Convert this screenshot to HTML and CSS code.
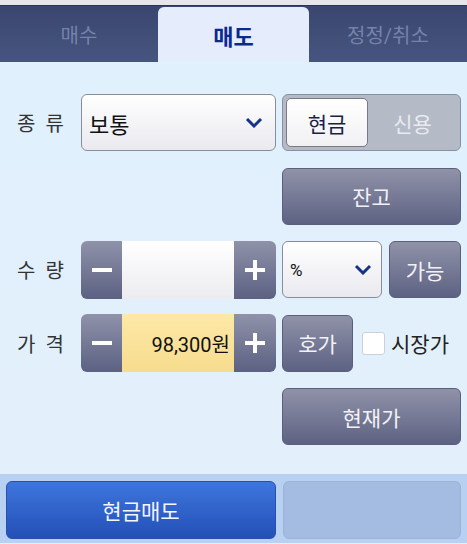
FILE: index.html
```html
<!DOCTYPE html>
<html lang="ko">
<head>
  <meta charset="UTF-8" />
  <meta name="viewport" content="width=device-width, initial-scale=1.0"/>
  <title>매도</title>
  <link rel="stylesheet" href="styles.css">
</head>
<body>
  <div class="topline"></div>
  <div class="tabs">
    <div class="tab">매수</div>
    <div class="tab active">매도</div>
    <div class="tab">정정/취소</div>
  </div>

  <main class="content">
    <div class="row">
      <div class="label">종 류</div>
      <div class="select wide">
        <span>보통</span>
        <svg class="chev" width="18" height="11" viewBox="0 0 18 11"><path d="M2 2 L9 9 L16 2" fill="none" stroke="#16338a" stroke-width="3"/></svg>
      </div>
      <div class="toggle">
        <div class="toggle-item on">현금</div>
        <div class="toggle-item">신용</div>
      </div>
    </div>

    <div class="row">
      <div class="label"></div>
      <div class="spacer"></div>
      <button class="btn full">잔고</button>
    </div>

    <div class="row">
      <div class="label">수 량</div>
      <div class="stepper">
        <div class="step minus"><svg width="22" height="22" viewBox="0 0 22 22"><path d="M1 11 H21" stroke="#fff" stroke-width="4"/></svg></div>
        <div class="step-value"></div>
        <div class="step plus"><svg width="22" height="22" viewBox="0 0 22 22"><path d="M1 11 H21 M11 1 V21" stroke="#fff" stroke-width="4"/></svg></div>
      </div>
      <div class="right">
        <div class="select small">
          <span class="pct">%</span>
          <svg class="chev" width="18" height="11" viewBox="0 0 18 11"><path d="M2 2 L9 9 L16 2" fill="none" stroke="#16338a" stroke-width="3"/></svg>
        </div>
        <button class="btn short">가능</button>
      </div>
    </div>

    <div class="row">
      <div class="label">가 격</div>
      <div class="stepper">
        <div class="step minus"><svg width="22" height="22" viewBox="0 0 22 22"><path d="M1 11 H21" stroke="#fff" stroke-width="4"/></svg></div>
        <div class="step-value price">98,300원</div>
        <div class="step plus"><svg width="22" height="22" viewBox="0 0 22 22"><path d="M1 11 H21 M11 1 V21" stroke="#fff" stroke-width="4"/></svg></div>
      </div>
      <div class="right">
        <button class="btn hoga">호가</button>
        <label class="check"><span class="box"></span>시장가</label>
      </div>
    </div>

    <div class="row">
      <div class="label"></div>
      <div class="spacer"></div>
      <button class="btn full">현재가</button>
    </div>
  </main>

  <div class="bottom">
    <button class="order">현금매도</button>
    <div class="order-off"></div>
  </div>
</body>
</html>
```

FILE: styles.css
```css
* {
  margin: 0;
  padding: 0;
  box-sizing: border-box;
  font-family: Roboto, "Noto Sans CJK KR", sans-serif;
}

body {
  width: 467px;
  height: 544px;
  overflow: hidden;
  background: #e1f0fc;
}

.topline {
  height: 6px;
  background: #e6e6ea;
  border-bottom: 1px solid #2b3556;
}

.tabs {
  display: flex;
  height: 56px;
  background: linear-gradient(to bottom, #3a4670, #46557f);
}

.tab {
  width: 158px;
  display: flex;
  align-items: center;
  justify-content: center;
  font-size: 20px;
  color: #7583a8;
}

.tab.active {
  width: 151px;
  margin-top: 1px;
  background: #e5edfc;
  border-radius: 6px 6px 0 0;
  color: #0c2a8e;
  font-size: 22px;
  font-weight: 700;
}

.content {
  height: 412px;
  padding: 32px 6px 0 0;
  background: linear-gradient(to bottom, #e0f0fd, #e3f0fb);
  display: flex;
  flex-direction: column;
  gap: 16.5px;
}

.row {
  display: flex;
  align-items: center;
  height: 57px;
}

.label {
  width: 81px;
  text-align: center;
  font-size: 20px;
  color: #333;
  word-spacing: 5px;
}

.spacer {
  width: 201px;
}

.select {
  height: 57px;
  border: 1px solid #8a8c98;
  border-radius: 6px;
  background: linear-gradient(to bottom, #ffffff, #e9e9ef);
  display: flex;
  align-items: center;
  justify-content: space-between;
  font-size: 22px;
  color: #111;
}

.select.wide {
  width: 195px;
  padding: 0 12px 0 7px;
}

.select.small {
  width: 100px;
  padding: 0 9px 0 7px;
}

.pct {
  font-size: 17px;
}

.toggle {
  margin-left: 6px;
  width: 179px;
  height: 57px;
  padding: 3px;
  border: 1px solid #8a909f;
  border-radius: 6px;
  background: #b4bbc7;
  display: flex;
}

.toggle-item {
  flex: 1;
  display: flex;
  align-items: center;
  justify-content: center;
  font-size: 21px;
  color: #e8ebf0;
}

.toggle-item.on {
  flex: none;
  width: 82px;
  background: linear-gradient(to bottom, #ffffff, #f1f1f4);
  border: 1px solid #777a86;
  border-radius: 5px;
  color: #1c1f45;
}

.btn {
  height: 57px;
  border: 1px solid #5a5f7a;
  border-radius: 6px;
  background: linear-gradient(to bottom, #9092a8, #5d6283);
  color: #f2f2f6;
  font-size: 21px;
}

.btn.full {
  width: 179px;
}

.btn.short {
  width: 72px;
}

.btn.hoga {
  width: 71px;
}

.right {
  margin-left: 6px;
  width: 179px;
  display: flex;
  align-items: center;
  gap: 7px;
}

.stepper {
  width: 195px;
  height: 58px;
  border-radius: 6px;
  overflow: hidden;
  display: flex;
  background: linear-gradient(to bottom, #8f92a9, #5c6183);
}

.step {
  width: 41px;
  display: flex;
  align-items: center;
  justify-content: center;
}

.step.plus {
  width: 42px;
}

.step-value {
  flex: 1;
  background: linear-gradient(to bottom, #ffffff, #ececf0);
  display: flex;
  align-items: center;
  justify-content: flex-end;
  padding-right: 4px;
  font-size: 20px;
  color: #111;
}

.step-value.price {
  background: linear-gradient(to bottom, #fde8a6, #f6dc8e);
}

.check {
  display: flex;
  align-items: center;
  gap: 6px;
  margin-left: 2px;
  font-size: 21px;
  color: #222;
}

.box {
  width: 23px;
  height: 23px;
  background: #fff;
  border: 1px solid #c9d2dc;
  border-radius: 3px;
}

.bottom {
  height: 69px;
  background: #b8d0f1;
  padding: 7px 6px 4px 6px;
  display: flex;
  gap: 7px;
}

.order {
  width: 270px;
  border: 1px solid #2a4fae;
  border-radius: 6px;
  background: linear-gradient(to bottom, #3e76dd, #2350b7);
  color: #f4f7ff;
  font-size: 21px;
}

.order-off {
  flex: 1;
  border: 1px solid #9cb3d8;
  border-radius: 6px;
  background: #a4bce2;
}
```
